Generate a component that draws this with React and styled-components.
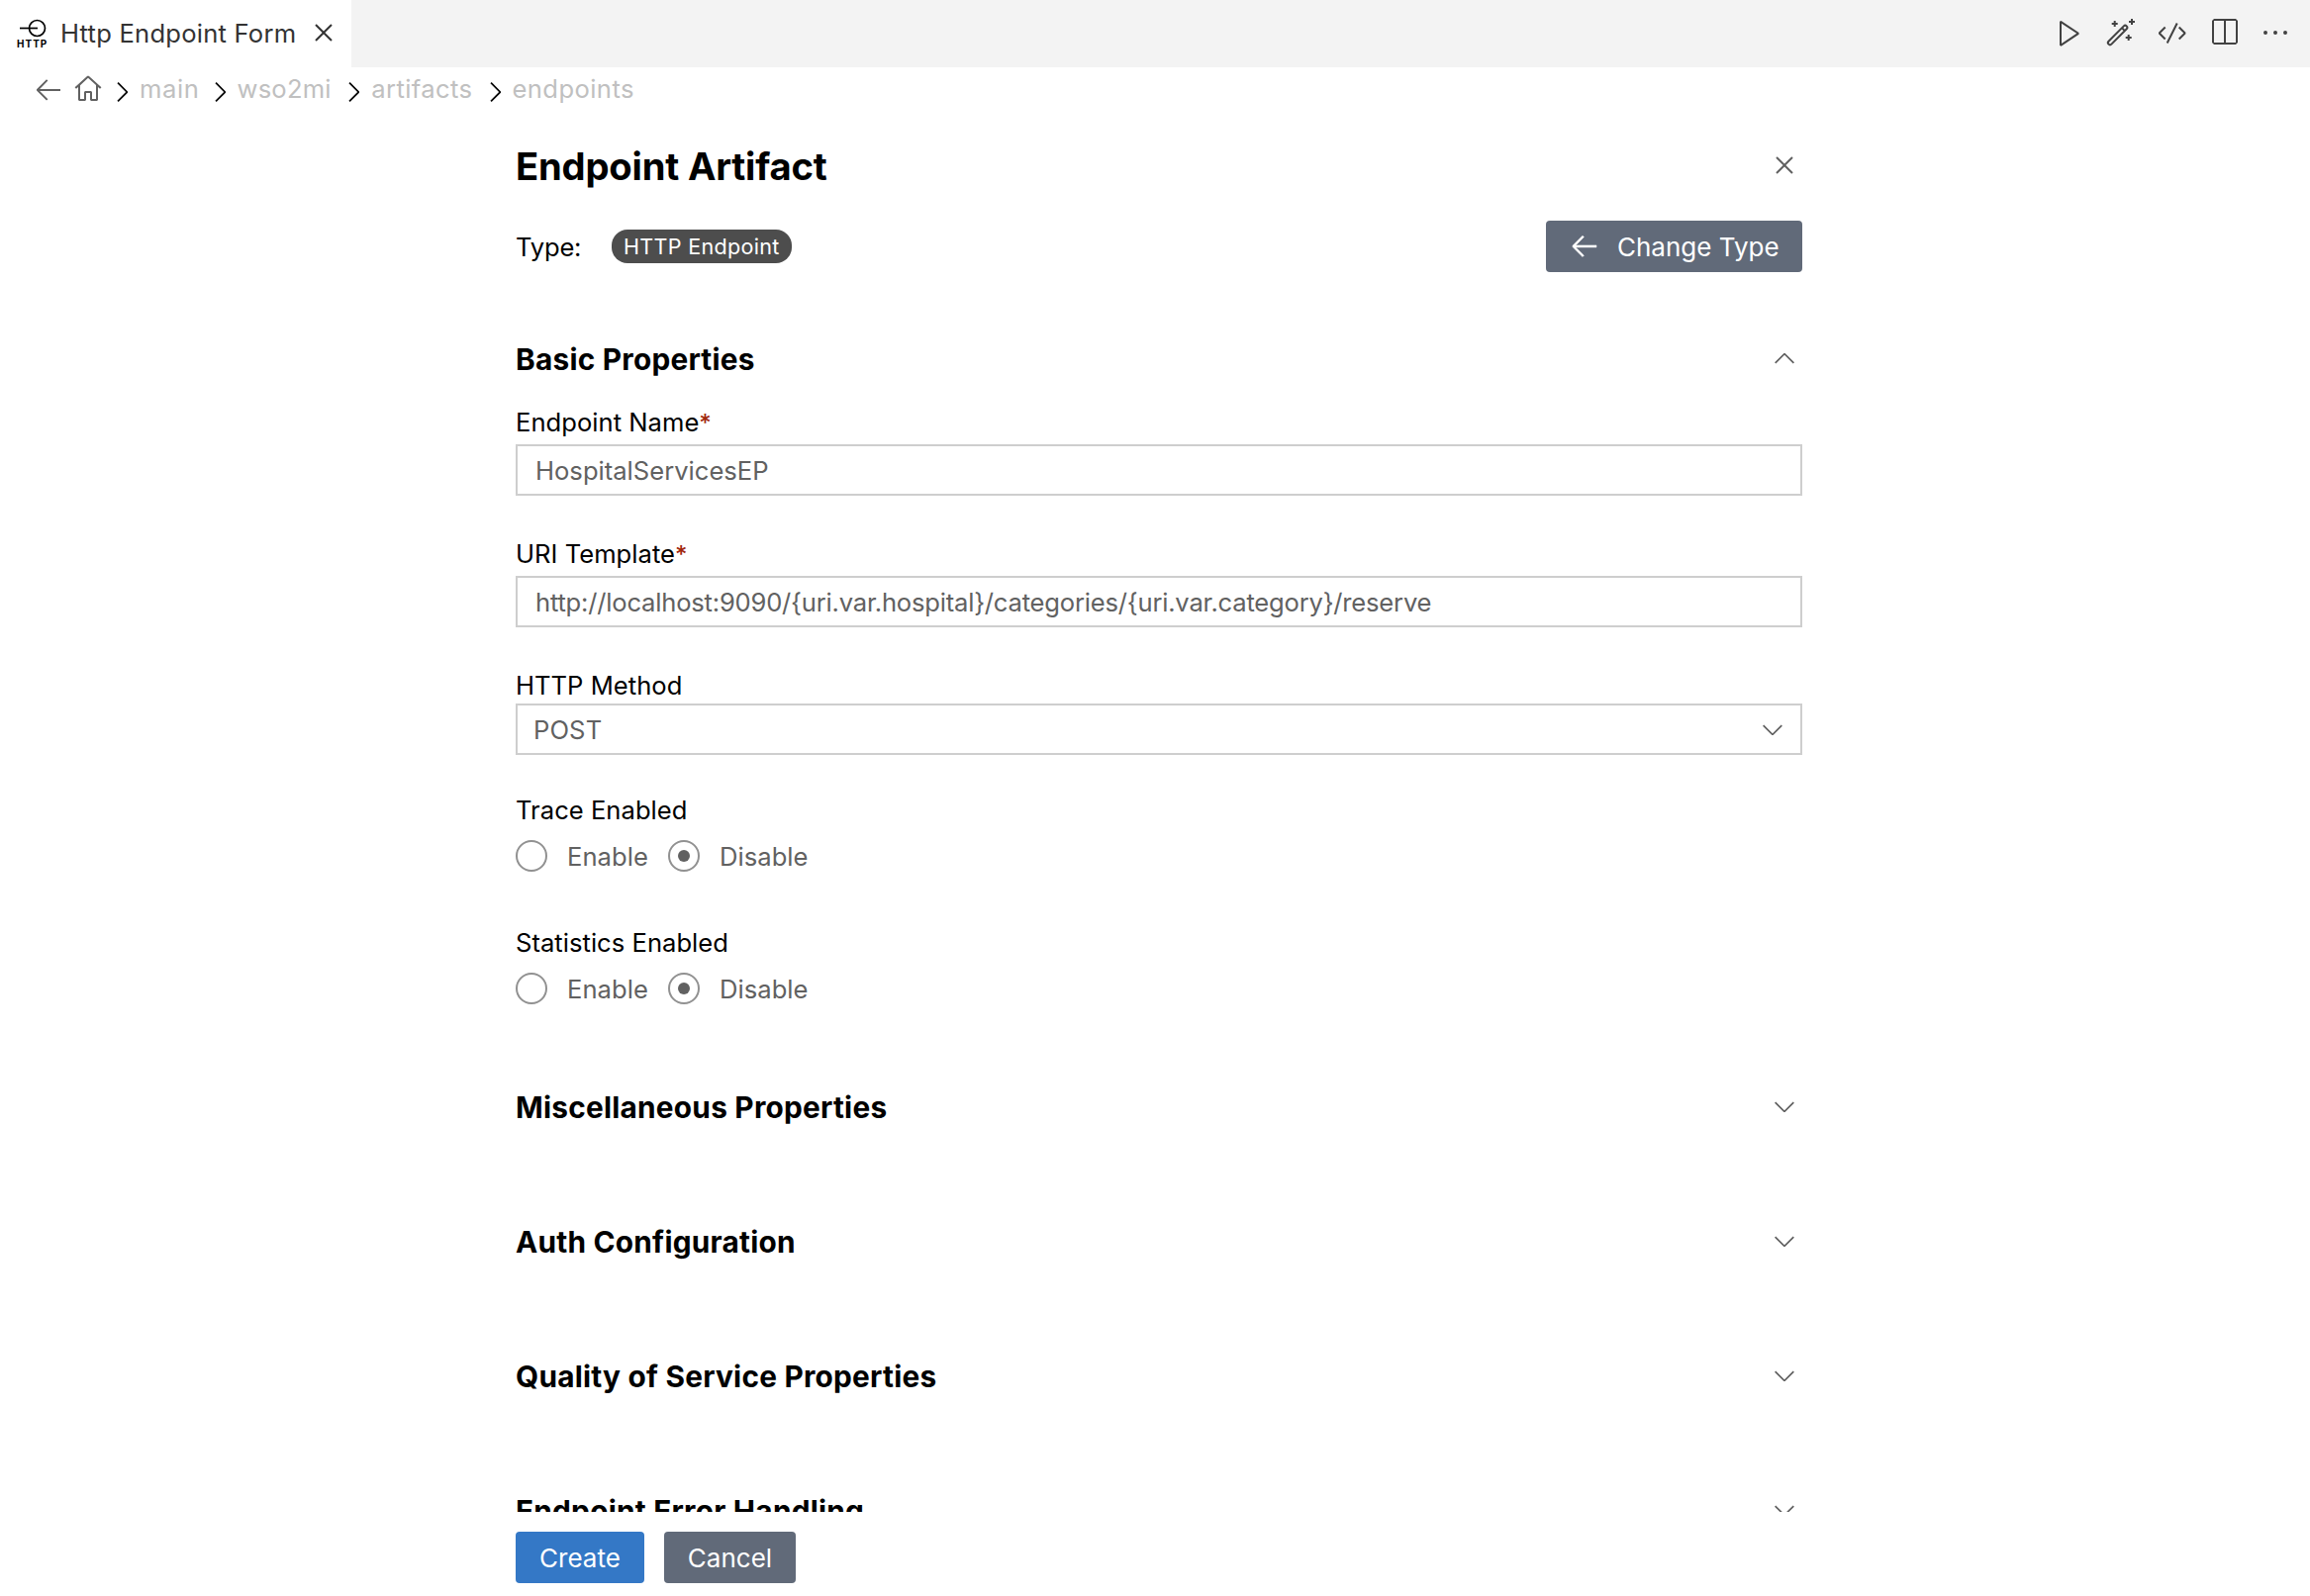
import React, { useState } from "react";
import styled, { createGlobalStyle } from "styled-components";

const GlobalStyle = createGlobalStyle`
  *, *::before, *::after { box-sizing: border-box; }
  body {
    margin: 0;
    background: #fff;
    color: #000;
    font-family: Inter, "Liberation Sans", sans-serif;
    font-size: 25.6px;
    line-height: 32px;
    overflow: hidden;
  }
`;

/* ---------- icons (16 unit grid) ---------- */

const paths = {
  chevronDown: "M7.976 10.072l4.357-4.357.62.618L8.284 11h-.618L3 6.333l.619-.618 4.357 4.357z",
  chevronUp: "M8.024 5.928l-4.357 4.357-.62-.618L7.716 5h.618L13 9.667l-.619.618-4.357-4.357z",
  chevronRight: "M10.072 8.024L5.715 3.667l.618-.62L11 7.716v.618L6.333 13l-.618-.619 4.357-4.357z",
  close: "M8 8.707l3.646 3.647.708-.707L8.707 8l3.647-3.646-.707-.708L8 7.293 4.354 3.646l-.707.708L7.293 8l-3.646 3.646.707.708L8 8.707z",
  arrowLeft: "M7 3.093l-5 5V8.8l5 5 .707-.707-4.146-4.147H14v-1H3.56L7.708 3.8 7 3.093z",
  home: "M8.36 1.37l6.36 5.8-.71.71L13 6.964v6.526l-.5.5h-3l-.5-.5v-3.5H7v3.5l-.5.5h-3l-.5-.5V6.972L2 7.88l-.71-.71 6.35-5.8h.72zM4 6.063v6.927h2v-3.5l.5-.5h3l.5.5v3.5h2V6.057L8 2.43 4 6.063z",
  play: "M3.78 2L3 2.41v12l.78.42 9-6V8l-9-6zM4 13.48V3.35l7.6 5.07L4 13.48z",
  code: "M4.708 5.578L2.061 8.224l2.647 2.646-.708.708-3-3V7.87l3-3 .708.708zm7-.708L11 5.578l2.647 2.646L11 10.87l.708.708 3-3V7.87l-3-3zM4.908 13l.894.448 5-10L9.908 3l-5 10z",
  split: "M14 1H3L2 2v11l1 1h11l1-1V2l-1-1zM8 13H3V2h5v11zm6 0H9V2h5v11z",
  ellipsis: "M4 8a1 1 0 1 1-2 0 1 1 0 0 1 2 0zm5 0a1 1 0 1 1-2 0 1 1 0 0 1 2 0zm5 0a1 1 0 1 1-2 0 1 1 0 0 1 2 0z",
};

const Svg = styled.svg`
  display: block;
  flex: none;
  width: 32px;
  height: 32px;
  fill: ${(p) => p.$color || "#616161"};
`;

const Icon = ({ name, color, className }) => (
  <Svg viewBox="0 0 16 16" $color={color} className={className}>
    <path d={paths[name]} fillRule="evenodd" />
  </Svg>
);

const WandIcon = () => (
  <Svg viewBox="0 0 16 16" $color="none">
    <g stroke="#424242" strokeWidth="1" fill="none">
      <path d="M1.75 12.35L9.4 4.7a1 1 0 0 1 1.45 1.45L3.2 13.8a1 1 0 0 1-1.45-1.45zM8.5 5.6l1.45 1.45" />
      <path d="M4.85 2v3M3.35 3.5h3M13.5 1v3M12 2.5h3M11.85 9v3M10.35 10.5h3" />
    </g>
  </Svg>
);

/* ---------- tab bar ---------- */

const TabBar = styled.header`
  display: flex;
  justify-content: space-between;
  height: 68px;
  background: #f3f3f3;
`;

const Tab = styled.div`
  display: flex;
  align-items: center;
  width: 355px;
  padding: 0 12px 2px 17px;
  background: #fff;
  color: #333;
`;

const TabIcon = styled.span`
  display: flex;
  flex-direction: column;
  align-items: flex-start;
  width: 43px;
  padding-top: 1px;
  color: #000;
  font-size: 10px;
  font-weight: 700;
  line-height: 11px;
  letter-spacing: 1px;
`;

const EndpointGlyph = styled.svg`
  display: block;
  width: 32px;
  height: 20px;
  margin-bottom: 1px;
  fill: none;
  stroke: #000;
  stroke-width: 1.7;
`;

const TabTitle = styled.span`
  flex: 1;
  padding: 2px 0 0 1px;
  letter-spacing: 0.22px;
`;

const TabActions = styled.div`
  display: flex;
  align-items: center;
  gap: 20px;
  padding: 0 19px 2px 0;
`;

/* ---------- breadcrumb ---------- */

const Breadcrumb = styled.nav`
  display: flex;
  align-items: center;
  height: 44px;
  margin-bottom: 1px;
  padding-left: 33px;
  color: #c0c0c0;
`;

const HomeIcon = styled(Icon)`
  margin: 0 2px 0 8px;
`;

const CrumbChevron = styled(Icon)`
  margin: 6px 2px 0 0;
`;

const Crumb = styled.span`
  margin-right: ${(p) => p.$after}px;
  letter-spacing: ${(p) => p.$spacing}px;
`;

/* ---------- form ---------- */

const Shell = styled.div`
  display: flex;
  flex-direction: column;
  height: 1613px;
`;

const Scroll = styled.main`
  height: 1415px;
  padding: 31px 513px 0 521px;
  overflow: hidden;
`;

const TitleRow = styled.div`
  display: flex;
  align-items: center;
  justify-content: space-between;
  height: 48px;
  padding-right: 2px;
`;

const Title = styled.h1`
  margin: 0;
  font-size: 38.2px;
  font-weight: 700;
  line-height: 48px;
  letter-spacing: -0.2px;
`;

const TypeRow = styled.div`
  display: flex;
  align-items: center;
  height: 52px;
  margin: 31px 0 72px;
`;

const TypeLabel = styled.span`
  width: 97px;
  padding-top: 2px;
  letter-spacing: -0.2px;
`;

const Badge = styled.span`
  height: 34px;
  padding: 0 12px;
  border-radius: 16px;
  background: #4d4d4d;
  color: #fff;
  font-size: 21.6px;
  line-height: 34px;
  letter-spacing: 0.28px;
`;

const Button = styled.button`
  display: flex;
  align-items: center;
  justify-content: ${(p) => (p.$icon ? "flex-start" : "center")};
  gap: 17px;
  width: ${(p) => p.$width}px;
  height: 52px;
  margin-left: ${(p) => (p.$icon ? "auto" : "0")};
  padding: 0 0 0 ${(p) => (p.$icon ? 23 : 0)}px;
  border: 0;
  border-radius: 4px;
  background: ${(p) => (p.$primary ? "#3478c6" : "#616a79")};
  color: #fff;
  font: 400 26px/32px Inter, "Liberation Sans", sans-serif;
`;

const ButtonText = styled.span`
  padding-top: 2px;
`;

const ButtonIcon = styled(Icon)`
  margin-bottom: 2px;
  stroke: #fff;
  stroke-width: 0.25;
`;

const SectionHeader = styled.div`
  display: flex;
  align-items: center;
  justify-content: space-between;
  height: 32px;
  margin-bottom: ${(p) => (p.$open ? 32 : 104)}px;
  padding-right: 2px;
`;

const SectionTitle = styled.h2`
  margin: 0;
  font-size: 29.8px;
  font-weight: 700;
  line-height: 32px;
  letter-spacing: 0.23px;
`;

const SectionIcon = styled(Icon)`
  margin-bottom: 2px;
`;

const Field = styled.div`
  margin-bottom: ${(p) => p.$after}px;
`;

const Label = styled.div`
  margin-bottom: ${(p) => p.$gap}px;
  letter-spacing: 0.02px;
`;

const Required = styled.span`
  color: #a1260d;
  font-size: 24px;
  font-weight: 500;
  line-height: 0;
`;

const Box = styled.div`
  display: flex;
  align-items: center;
  justify-content: space-between;
  height: 52px;
  padding: 0 12px 0 ${(p) => p.$inset}px;
  border: 2px solid #cecece;
  color: #616161;
  letter-spacing: ${(p) => p.$spacing}px;
`;

const BoxText = styled.span`
  padding-top: 2px;
`;

const RadioGroup = styled.div`
  display: flex;
  align-items: center;
  gap: 20px;
  height: 32px;
`;

const RadioOption = styled.div`
  display: flex;
  align-items: center;
  gap: 20px;
  color: #616161;
  letter-spacing: 0.04px;
  cursor: pointer;
`;

const RadioText = styled.span`
  padding-top: 2px;
`;

const RadioMark = styled.span`
  display: grid;
  place-items: center;
  width: 32px;
  height: 32px;
  border: 2px solid #919191;
  border-radius: 50%;

  &::after {
    content: "";
    width: 12px;
    height: 12px;
    border-radius: 50%;
    background: ${(p) => (p.$checked ? "#616161" : "transparent")};
  }
`;

const Footer = styled.footer`
  display: flex;
  gap: 20px;
  padding: 20px 0 0 521px;
`;

function Toggle({ label, after }) {
  const [value, setValue] = useState("Disable");
  return (
    <Field $after={after}>
      <Label $gap={14}>{label}</Label>
      <RadioGroup>
        {["Enable", "Disable"].map((option) => (
          <RadioOption key={option} onClick={() => setValue(option)}>
            <RadioMark $checked={value === option} />
            <RadioText>{option}</RadioText>
          </RadioOption>
        ))}
      </RadioGroup>
    </Field>
  );
}

function TextInput({ label, value, spacing }) {
  return (
    <Field $after={43}>
      <Label $gap={6}>
        {label}
        <Required>*</Required>
      </Label>
      <Box $inset={18} $spacing={spacing}>
        <BoxText>{value}</BoxText>
      </Box>
    </Field>
  );
}

const crumbs = [
  ["main", 0.6, 4],
  ["wso2mi", 0.2, 6.5],
  ["artifacts", 0.4, 6],
  ["endpoints", 0.4, 0],
];

const collapsedSections = [
  "Miscellaneous Properties",
  "Auth Configuration",
  "Quality of Service Properties",
  "Endpoint Error Handling",
];

export default function App() {
  return (
    <Shell>
      <GlobalStyle />
      <TabBar>
        <Tab>
          <TabIcon>
            <EndpointGlyph viewBox="0 0 32 20">
              <circle cx="20.5" cy="10.5" r="8" />
              <path d="M3 10.5h18" />
            </EndpointGlyph>
            HTTP
          </TabIcon>
          <TabTitle>Http Endpoint Form</TabTitle>
          <Icon name="close" color="#333" />
        </Tab>
        <TabActions>
          <Icon name="play" color="#424242" />
          <WandIcon />
          <Icon name="code" color="#424242" />
          <Icon name="split" color="#424242" />
          <Icon name="ellipsis" color="#424242" />
        </TabActions>
      </TabBar>

      <Breadcrumb>
        <Icon name="arrowLeft" />
        <HomeIcon name="home" />
        {crumbs.map(([name, spacing, after]) => (
          <React.Fragment key={name}>
            <CrumbChevron name="chevronRight" color="#000" />
            <Crumb $spacing={spacing} $after={after}>{name}</Crumb>
          </React.Fragment>
        ))}
      </Breadcrumb>

      <Scroll>
        <TitleRow>
          <Title>Endpoint Artifact</Title>
          <SectionIcon name="close" />
        </TitleRow>
        <TypeRow>
          <TypeLabel>Type:</TypeLabel>
          <Badge>HTTP Endpoint</Badge>
          <Button $icon $width={259}>
            <ButtonIcon name="arrowLeft" color="#fff" />
            <ButtonText>Change Type</ButtonText>
          </Button>
        </TypeRow>

        <SectionHeader $open>
          <SectionTitle>Basic Properties</SectionTitle>
          <Icon name="chevronUp" />
        </SectionHeader>
        <TextInput label="Endpoint Name" value="HospitalServicesEP" spacing={0} />
        <TextInput
          label="URI Template"
          value="http://localhost:9090/{uri.var.hospital}/categories/{uri.var.category}/reserve"
          spacing={-0.21}
        />
        <Field $after={40}>
          <Label $gap={2}>HTTP Method</Label>
          <Box $inset={16} $spacing={0.1}>
            <BoxText>POST</BoxText>
            <Icon name="chevronDown" />
          </Box>
        </Field>
        <Toggle label="Trace Enabled" after={56} />
        <Toggle label="Statistics Enabled" after={88} />

        {collapsedSections.map((title) => (
          <SectionHeader key={title}>
            <SectionTitle>{title}</SectionTitle>
            <SectionIcon name="chevronDown" />
          </SectionHeader>
        ))}
      </Scroll>

      <Footer>
        <Button $primary $width={130}>
          <ButtonText>Create</ButtonText>
        </Button>
        <Button $width={133}>
          <ButtonText>Cancel</ButtonText>
        </Button>
      </Footer>
    </Shell>
  );
}
